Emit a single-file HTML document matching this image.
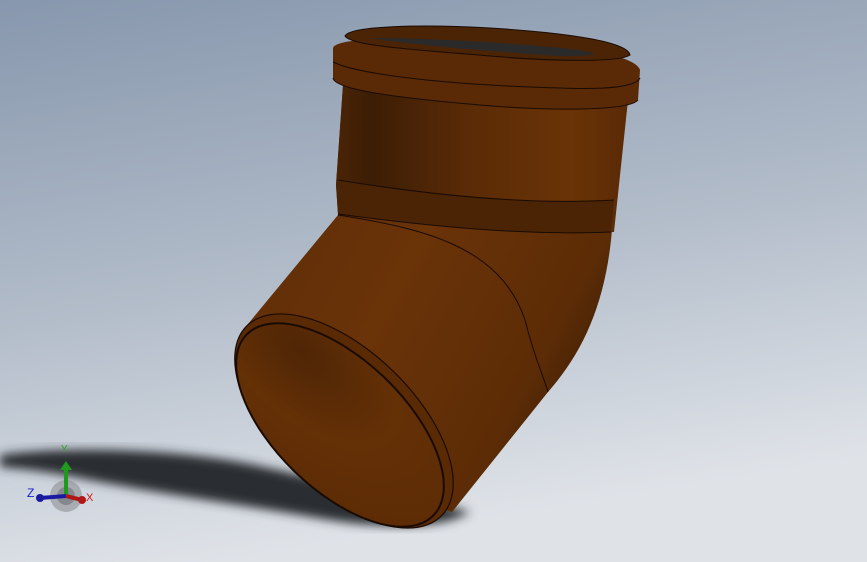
<!DOCTYPE html>
<html><head><style>html,body{margin:0;padding:0;overflow:hidden}body{width:867px;height:562px}</style></head>
<body>
<svg width="867" height="562" viewBox="0 0 867 562" xmlns="http://www.w3.org/2000/svg">
<defs>
<linearGradient id="bg" x1="0" y1="0" x2="0.25" y2="1">
<stop offset="0" stop-color="#8797ad"/><stop offset="0.55" stop-color="#b3bdca"/><stop offset="1" stop-color="#dfe3e8"/></linearGradient>
<linearGradient id="up" x1="0" y1="0" x2="1" y2="0">
<stop offset="0" stop-color="#4a2406"/><stop offset="0.12" stop-color="#3c1d05"/><stop offset="0.45" stop-color="#5a2b06"/><stop offset="0.8" stop-color="#6a3307"/><stop offset="1" stop-color="#5a2a05"/></linearGradient>
<linearGradient id="body" x1="0" y1="0" x2="1" y2="0.6">
<stop offset="0" stop-color="#5c2c06"/><stop offset="0.5" stop-color="#6a3308"/><stop offset="0.85" stop-color="#5c2c06"/><stop offset="1" stop-color="#3d1e04"/></linearGradient>
<radialGradient id="face" cx="0.2" cy="0.3" r="0.9">
<stop offset="0" stop-color="#4f2606"/><stop offset="0.5" stop-color="#643006"/><stop offset="1" stop-color="#5c2b05"/></radialGradient>
<filter id="bl"><feGaussianBlur stdDeviation="5"/></filter>
</defs>
<rect width="867" height="562" fill="url(#bg)"/>
<path d="M0,455 C60,446 180,448 260,466 C330,482 420,498 470,512 C440,530 380,528 330,520 C250,506 160,494 80,478 C40,470 10,468 0,467 Z" fill="#2b2d31" filter="url(#bl)"/>
<path d="M243,330 L338,215 L336,185 L343,85 L628,100 L612,230 C606,300 585,350 548,392 L452,512 L300,470 Z" fill="url(#body)"/>
<path d="M343,85 L628,100 L614,232 C520,236 420,225 338,214 L336,185 Z" fill="url(#up)"/>
<path d="M338,180 C430,195 530,205 614,200 L611,232 C520,236 420,225 338,214 Z" fill="#4a2405"/>
<path d="M338,180 C430,195 530,205 614,200" stroke="#1a0b02" fill="none" stroke-width="1"/>
<path d="M338,214 C420,225 520,236 611,232" stroke="#1a0b02" fill="none" stroke-width="1"/>
<path d="M338,215 C420,228 500,245 525,320 C535,360 545,380 548,392" stroke="#1a0b02" fill="none" stroke-width="1"/>
<path d="M333,48 C335,38 400,36 485,40 C570,44 636,55 640,70 L638,100 C630,110 560,112 480,105 C400,98 335,90 333,78 Z" fill="#5a2a06"/>
<path d="M333,78 C335,90 400,98 480,105 C560,112 630,110 638,100" stroke="#1a0b02" fill="none"/>
<path d="M333,62 C360,75 450,85 560,88 C610,90 636,86 640,78" stroke="#1a0b02" fill="none"/>
<path d="M345,36 C350,26 420,24 490,28 C570,33 628,42 630,55 C620,62 560,62 490,56 C420,50 350,46 345,36 Z" fill="#4a2405" stroke="#1a0b02"/>
<path d="M370,38 C420,38 500,42 560,48 C600,52 610,56 560,56 C500,52 420,46 370,38 Z" fill="#2b2a2a"/>
<ellipse cx="344" cy="421" rx="136" ry="70" transform="rotate(44 344 421)" fill="#5a2a05" stroke="#1a0b02" stroke-width="1.2"/>
<ellipse cx="340" cy="425" rx="130" ry="65" transform="rotate(44 340 425)" fill="url(#face)" stroke="#1a0b02" stroke-width="2"/>
<circle cx="66" cy="496" r="16" fill="#8d8f94" opacity="0.6"/>
<circle cx="66" cy="496" r="9" fill="#6e7176" opacity="0.6"/>
<rect x="64" y="467" width="4" height="30" fill="#1f9a1f"/>
<polygon points="60,470 66,461 72,470" fill="#1f9a1f"/>
<line x1="40" y1="498" x2="66" y2="496" stroke="#1a1aa0" stroke-width="4"/>
<circle cx="40" cy="498" r="4" fill="#1a1aa0"/>
<line x1="66" y1="496" x2="82" y2="500" stroke="#b01818" stroke-width="4"/>
<circle cx="82" cy="500" r="4" fill="#b01818"/>
<text x="61" y="452" font-family="Liberation Sans,sans-serif" font-size="10" fill="#2aa52a">Y</text>
<text x="27" y="497" font-family="Liberation Sans,sans-serif" font-size="12" fill="#1a1ad0">Z</text>
<text x="86" y="501" font-family="Liberation Sans,sans-serif" font-size="11" fill="#d01818">X</text>
</svg>
</body></html>
